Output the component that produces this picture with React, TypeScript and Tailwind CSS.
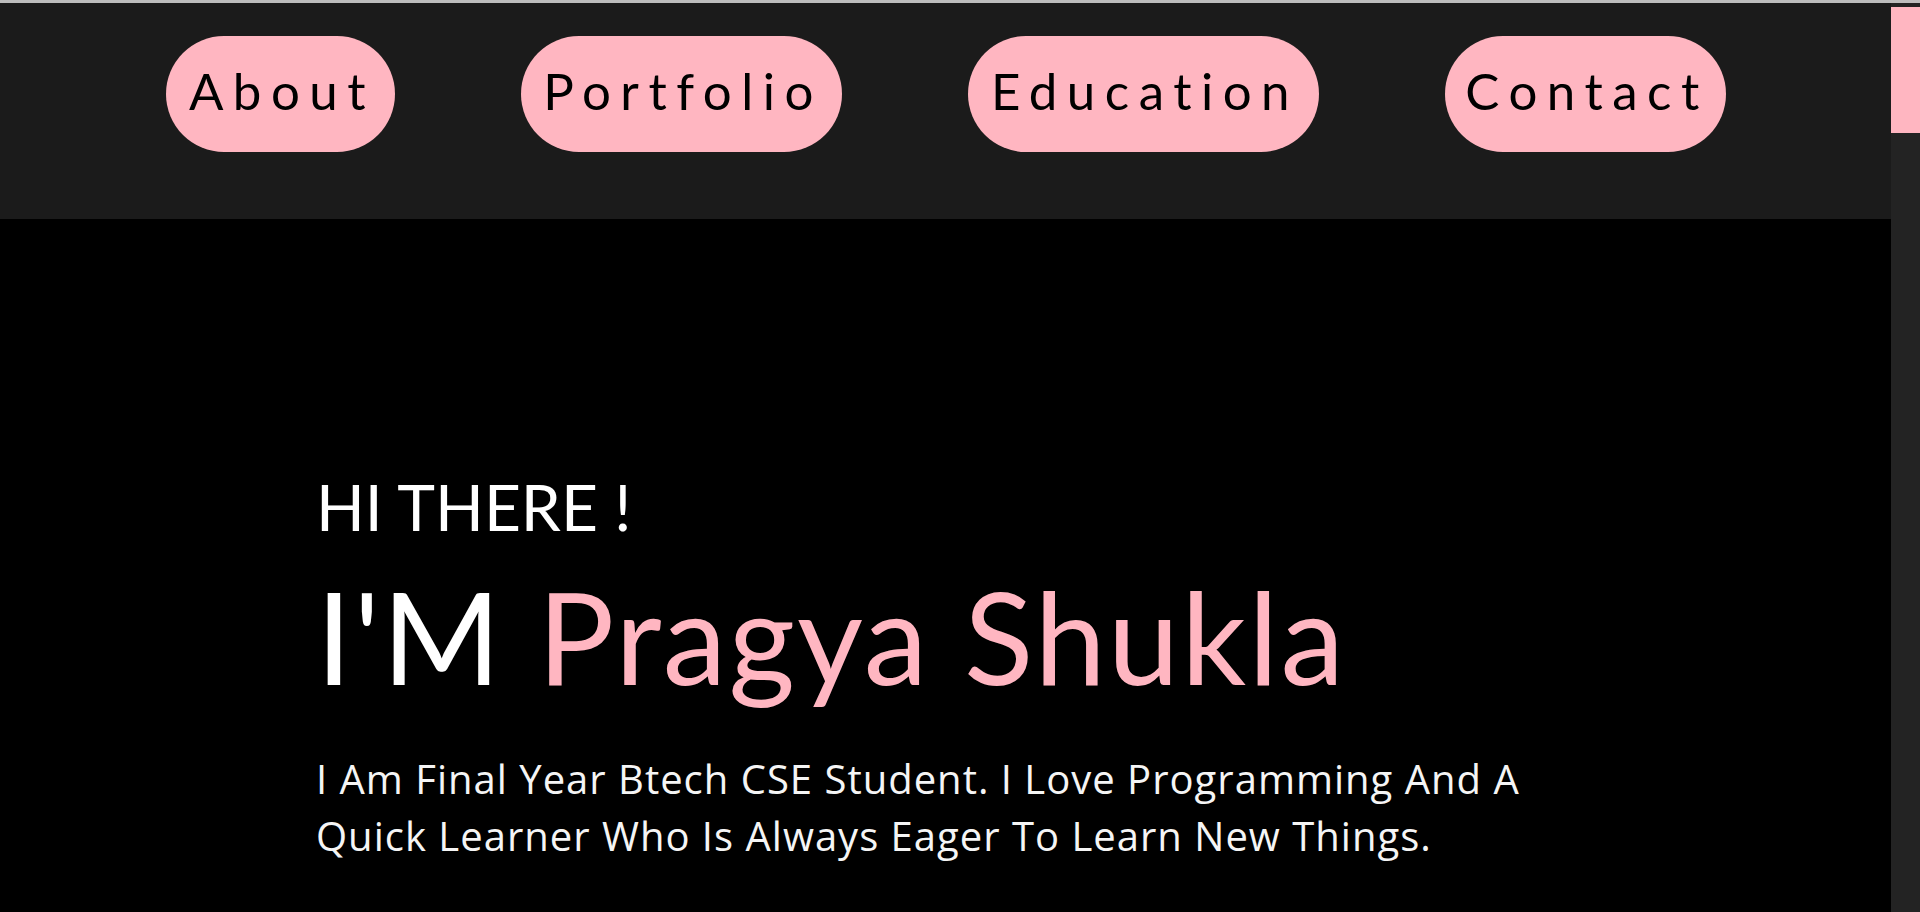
import React from "react";

const navItems = [
  { label: "About", w: "w-[229px]" },
  { label: "Portfolio", w: "w-[321px]" },
  { label: "Education", w: "w-[351px]" },
  { label: "Contact", w: "w-[281px]" },
];

export default function App() {
  return (
    <div
      className="h-[912px] w-full overflow-hidden flex flex-col bg-black"
      style={{ fontFamily: "Lato, 'Noto Sans', sans-serif" }}
    >
      <div className="h-[3px] w-full bg-[#bdbdbd] shrink-0" />
      <div className="flex flex-1 min-h-0">
        <div className="flex-1 flex flex-col min-w-0">
          <header className="h-[216px] shrink-0 bg-[#1b1b1b] pt-[33px] flex justify-center gap-[126px]">
            {navItems.map((n) => (
              <a
                key={n.label}
                href="#"
                className={`${n.w} h-[116px] rounded-full bg-[#ffb6c1] flex justify-center pt-[24px] text-black text-[51px] leading-[61px] tracking-[9.5px] pl-[4px]`}
              >
                {n.label}
              </a>
            ))}
          </header>
          <main className="flex-1 bg-black pl-[316px] pt-[249px] text-white">
            <h3 className="text-[64px] leading-[77px]">HI THERE !</h3>
            <h1 className="mt-[14px] text-[128px] leading-[154px] tracking-[2px]">
              I'M <span className="text-[#ffb6c1]">Pragya Shukla</span>
            </h1>
            <p
              className="mt-[37px] text-[40px] leading-[57px] tracking-[1px] text-[#f5f5f5]"
              style={{ fontFamily: "'Open Sans', Lato, sans-serif" }}
            >
              I Am Final Year Btech CSE Student. I Love Programming And A
              <br />
              Quick Learner Who Is Always Eager To Learn New Things.
            </p>
          </main>
        </div>
        <div className="w-[29px] shrink-0 bg-[#232323] pt-[4px]">
          <div className="h-[126px] w-full bg-[#ffb6c1]" />
        </div>
      </div>
    </div>
  );
}
